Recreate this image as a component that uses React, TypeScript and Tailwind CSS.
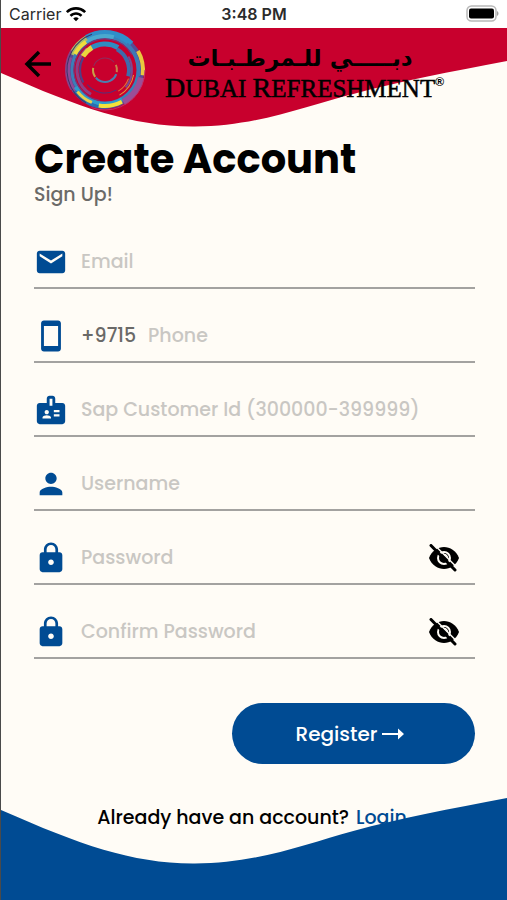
import { useState } from "react";
import type { ReactNode } from "react";
import { MdBadge, MdEmail, MdLock, MdPerson, MdSmartphone, MdWifi } from "react-icons/md";

// radius, colour, stroke width, start angle (clockwise from 3 o'clock), sweep
const ARCS: [number, string, number, number, number][] = [
  [36, "#5a4a94", 6, 0, 360],
  [33, "#3a7fb8", 3, 0, 360],
  [37, "#2f8fca", 6, 240, 75],
  [34, "#4aa9cf", 4, 225, 60],
  [37, "#a8bf6a", 5, 205, 35],
  [34, "#f0dc3c", 4, 208, 28],
  [39, "#8a3f86", 2, 150, 60],
  [37, "#8f4a96", 4, 145, 55],
  [38, "#e9c93f", 4, 330, 38],
  [34, "#3f78b5", 3, 310, 60],
  [37, "#9a4f98", 6, 12, 48],
  [34, "#2e9ccc", 4, 60, 90],
  [37, "#2a6fae", 3, 85, 60],
  [36, "#f4e23a", 4, 62, 38],
  [35, "#e8d24a", 3, 112, 30],
  [40, "#c0306a", 1, 0, 110],
  [38, "#3c3568", 1, 120, 130],
  [31, "#6d3c84", 1, 100, 230],
  [28, "#8d3f86", 3, 120, 110],
  [25, "#4f3f88", 2, 150, 60],
  [26, "#2f8cc0", 5, 235, 65],
  [26, "#ead53e", 5, 212, 28],
  [24, "#3f6bab", 4, 300, 75],
  [27, "#7a4a90", 2, 330, 70],
  [29, "#e59c38", 1, 10, 50],
  [25, "#e07a35", 1, 20, 38],
  [23, "#54307a", 1, 60, 80],
  [12, "#4b7fb0", 2, 20, 120],
  [12, "#c8a348", 2, 145, 45],
  [12, "#8b2f60", 1, 200, 120],
  [12, "#c8844a", 2, 335, 35],
];

function Swirl() {
  return (
    <svg viewBox="0 0 84 84" className="h-[84px] w-[84px] shrink-0" role="img" aria-label="Dubai Refreshment emblem">
      {ARCS.map(([r, color, width, start, sweep], i) => (
        <circle
          key={i}
          cx="42"
          cy="42"
          r={r}
          pathLength={360}
          fill="none"
          stroke={color}
          strokeWidth={width}
          strokeDasharray={`${sweep} ${361 - sweep}`}
          transform={`rotate(${start} 42 42)`}
        />
      ))}
    </svg>
  );
}

function EyeOff() {
  return (
    <svg viewBox="0 0 32 28" className="h-7 w-8" aria-hidden="true">
      <path d="M1 14C4 6.500 10 3 16 3S28 6.500 31 14C28 21.500 22 25 16 25S4 21.500 1 14Z" />
      <circle cx="16" cy="14" r="6" fill="none" stroke="#fffcf6" strokeWidth="2" />
      <path d="M16 10.500a3.500 3.500 0 0 1 3.500 3.500" fill="none" stroke="#fffcf6" strokeWidth="1.500" />
      <path d="M5 -0.500L30 24.500" stroke="#fffcf6" strokeWidth="1.500" />
      <path d="M3 1.500L27 26" stroke="#000" strokeWidth="3" strokeLinecap="round" />
    </svg>
  );
}

type FieldProps = {
  id: string;
  label: string;
  icon: ReactNode;
  type?: string;
  prefix?: string;
};

function Field({ id, label, icon, type = "text", prefix }: FieldProps) {
  const [shown, setShown] = useState(false);
  const secret = type === "password";
  return (
    <div className="flex h-[74px] items-center border-b-2 border-[#a3a2a0] pt-[22px]">
      <label htmlFor={id} aria-label={label} className="w-[47px] shrink-0 text-[34px] text-[#004b93]">
        {icon}
      </label>
      {prefix && <span className="mr-3 text-[19px] text-[#6a6967]">{prefix}</span>}
      <input
        id={id}
        type={secret && shown ? "text" : type}
        placeholder={label}
        className="min-w-0 flex-1 bg-transparent text-[19px] text-[#222] outline-none placeholder:text-[#c9c7c3]"
      />
      {secret && (
        <button type="button" aria-label={`Show ${label}`} onClick={() => setShown(!shown)} className="mr-[15px]">
          <EyeOff />
        </button>
      )}
    </div>
  );
}

export default function App() {
  return (
    <div className="relative flex min-h-screen flex-col border-l border-[#4a4a4a] bg-[#fffcf6] font-['Poppins','Inter',sans-serif] font-medium text-black">
      <div className="grid h-7 grid-cols-3 items-center bg-white px-2 font-['Inter',sans-serif] text-base text-[#2b2b2b]">
        <span className="flex items-center gap-1 font-normal">
          Carrier
          <MdWifi className="text-[22px] text-black" />
        </span>
        <span className="text-center font-semibold">3:48 PM</span>
        <svg viewBox="0 0 34 18" className="h-[18px] w-[34px] justify-self-end" aria-label="Battery full" role="img">
          <rect x="2" y="1" width="29" height="15" rx="4.500" fill="none" stroke="#b8b8b8" strokeWidth="1.500" />
          <rect x="4" y="3.500" width="25" height="10" rx="2" />
          <path d="M32 6v5c2-1 2-4 0-5Z" fill="#a0a0a0" />
        </svg>
      </div>

      <header className="relative h-[107px]">
        <svg viewBox="0 0 507 100" preserveAspectRatio="none" className="absolute inset-x-0 top-0 h-[100px] w-full" aria-hidden="true">
          <path d="M0 0V45 C80 80 130 98 192 98.500 C255 99 305 78 353 66 C400 53 450 44 507 33 V0Z" fill="#c8002d" />
        </svg>
        <div className="relative flex items-start pl-[22px]">
          <button type="button" aria-label="Back" className="mt-[21px] mr-2.5">
            <svg viewBox="0 0 30 30" className="h-[30px] w-[30px]" fill="none" stroke="#000" strokeWidth="3.500">
              <path d="M28 15H4M16 3L4 15l12 12" />
            </svg>
          </button>
          <Swirl />
          <div className="mt-3.5 ml-[18px] flex items-start whitespace-nowrap">
            <div className="flex flex-col items-center">
              <span lang="ar" dir="rtl" className="font-['DejaVu_Sans',sans-serif] text-[23px] leading-8 font-bold">
                دبـــــي للـمرطـبـات
              </span>
              <span className="font-['Liberation_Serif',serif] text-[25px] leading-7 font-normal [-webkit-text-stroke:0.5px_black]">
                <span className="text-[28px]">D</span>UBAI <span className="text-[28px]">R</span>EFRESHMENT
              </span>
            </div>
            <span className="mt-8 font-['Liberation_Sans',sans-serif] text-xs leading-4 font-bold">®</span>
          </div>
        </div>
      </header>

      <main className="relative z-10 pr-8 pl-[33px]">
        <h1 className="text-[40px] leading-[48px] font-bold whitespace-nowrap">Create Account</h1>
        <p className="text-[19px] leading-6 text-[#6b6a68]">Sign Up!</p>
        <form onSubmit={(e) => e.preventDefault()} className="mt-2">
          <Field id="email" label="Email" type="email" icon={<MdEmail />} />
          <Field id="phone" label="Phone" type="tel" prefix="+9715" icon={<MdSmartphone />} />
          <Field id="sap" label="Sap Customer Id (300000-399999)" icon={<MdBadge />} />
          <Field id="username" label="Username" icon={<MdPerson />} />
          <Field id="password" label="Password" type="password" icon={<MdLock />} />
          <Field id="confirm" label="Confirm Password" type="password" icon={<MdLock />} />
          <button type="submit" className="mt-11 ml-auto flex h-[61px] w-[243px] items-center justify-center gap-1 rounded-full bg-[#004b93] pr-1.5 text-xl text-white">
            Register
            <svg viewBox="0 0 24 14" className="h-3.5 w-6" fill="#fff" aria-hidden="true">
              <path d="M1 6h16V1.500l6 5.500-6 5.500V8H1Z" />
            </svg>
          </button>
        </form>
      </main>

      <footer className="relative mt-auto h-[102px]">
        <p className="pt-2 pr-1 text-center text-[19px] leading-6">
          Already have an account?{" "}
          <a href="#login" className="ml-0.5 text-[#004b93]">Login</a>
        </p>
        <svg viewBox="0 0 507 102" preserveAspectRatio="none" className="pointer-events-none absolute inset-0 h-full w-full" aria-hidden="true">
          <path d="M0 12 C80 47 130 65 192 65.500 C255 66 305 46 353 33 C400 20 450 11 507 0 V102H0Z" fill="#004b93" />
        </svg>
      </footer>
    </div>
  );
}
